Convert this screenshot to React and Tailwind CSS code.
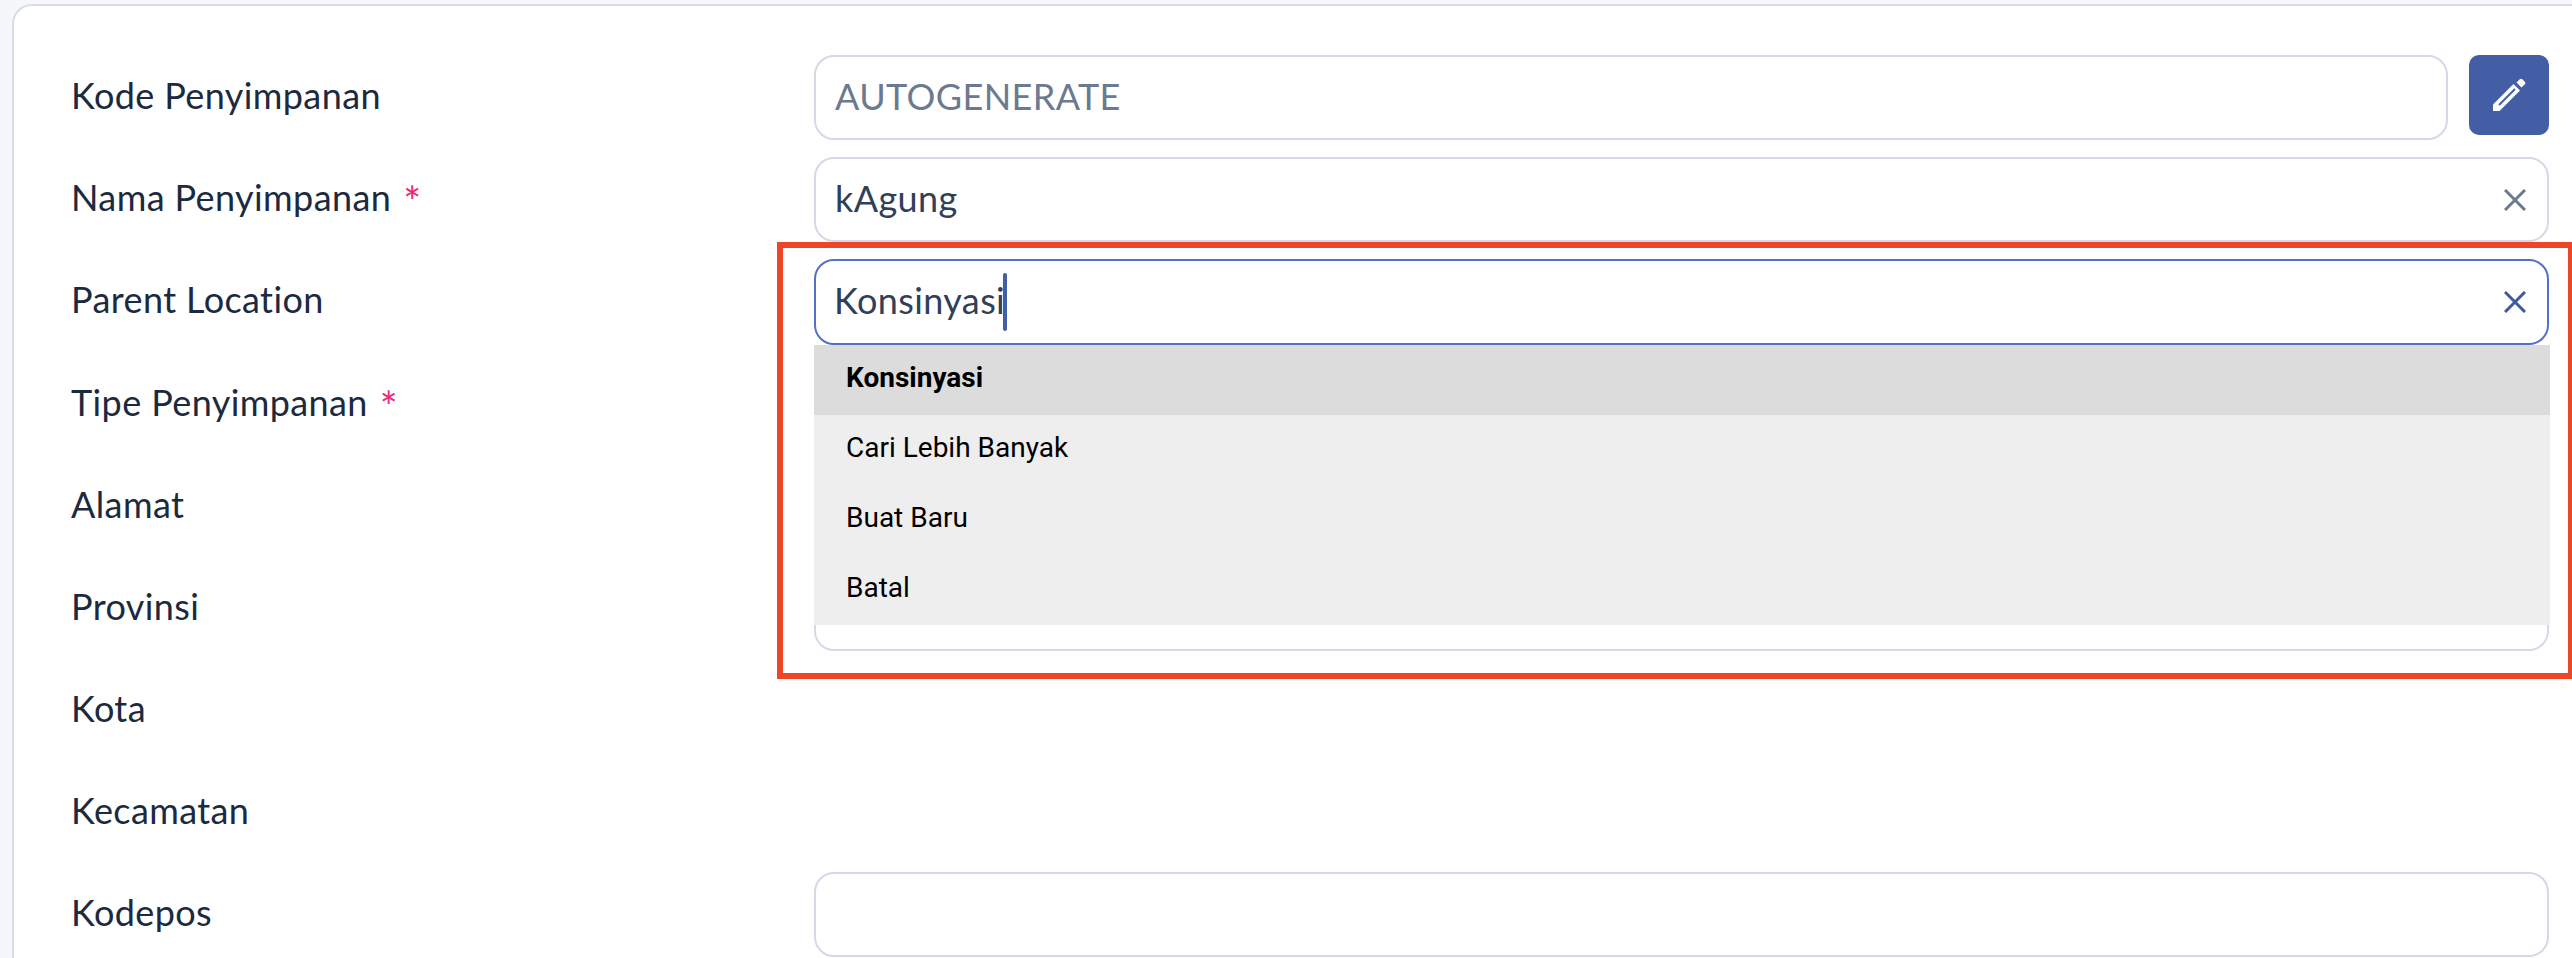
const FIELDS = [
  { label: 'Kode Penyimpanan', input: 'code' },
  { label: 'Nama Penyimpanan', required: true, input: 'name' },
  { label: 'Parent Location', input: 'parent' },
  { label: 'Tipe Penyimpanan', required: true },
  { label: 'Alamat' },
  { label: 'Provinsi' },
  { label: 'Kota' },
  { label: 'Kecamatan' },
  { label: 'Kodepos', input: 'empty' },
];

const OPTIONS = ['Konsinyasi', 'Cari Lebih Banyak', 'Buat Baru', 'Batal'];

function CloseIcon({ className }) {
  return (
    <svg viewBox="0 0 22 22" className={className} fill="none" stroke="currentColor" strokeWidth="3">
      <path d="M1 1 21 21M21 1 1 21" />
    </svg>
  );
}

function PencilIcon() {
  return (
    <svg viewBox="0 0 34 34" className="w-[34px] h-[34px]" fill="#fff">
      <path d="M1 33V26.5L21.5 6 28 12.5 7.5 33Z" />
      <path d="M7 27 23 11" stroke="#445ea6" strokeWidth="2" fill="none" />
      <path d="M24.5 4.5 27.5 1.5a2 2 0 0 1 3 0l2 2a2 2 0 0 1 0 3L29.5 9.5Z" />
    </svg>
  );
}

function ParentInput() {
  return (
    <div className="relative">
      <div className="h-[86px] flex items-center justify-between pl-[18px] pr-[21px] rounded-[20px] border-2 border-[#5570c8] bg-white text-[#2f4058]">
        <div className="flex items-center">
          <span className="pb-1">Konsinyasi</span>
          <span className="w-1 h-[58px] -ml-0.5 rounded-full bg-[#445ea6]" />
        </div>
        <CloseIcon className="w-[22px] h-[22px] text-[#40589f]" />
      </div>
      {/* dropdown over the next fields */}
      <div className="absolute z-10 left-0 right-0 top-full h-[306px] rounded-b-[20px] border-x-2 border-b-2 border-[#d3d9e6] bg-white">
        <div className="-mx-0.5 -mr-[3px] font-['Roboto',sans-serif] text-[28px] tracking-normal text-black bg-[#eeeeee]">
          {OPTIONS.map((opt, i) => (
            <div key={opt} className={`h-[70px] flex items-center pl-[32px] pb-1 ${i === 0 ? 'bg-[#dcdcdc] font-bold' : ''}`}>
              {opt}
            </div>
          ))}
        </div>
      </div>
    </div>
  );
}

function FieldInput({ type }) {
  if (type === 'code') {
    return (
      <div className="flex gap-[21px]">
        <div className="flex-1 h-[85px] flex items-center pl-[19px] pb-1 rounded-[20px] border-2 border-[#d3d9e6] bg-white text-[#6b7a90]">
          AUTOGENERATE
        </div>
        <button className="w-[80px] h-[80px] flex items-center justify-center rounded-[10px] bg-[#445ea6]">
          <PencilIcon />
        </button>
      </div>
    );
  }
  if (type === 'name') {
    return (
      <div className="h-[85px] flex items-center justify-between pl-[19px] pr-[21px] rounded-[20px] border-2 border-[#d3d9e6] bg-white text-[#2f4058]">
        <span className="pb-1">kAgung</span>
        <CloseIcon className="w-[22px] h-[22px] text-[#6b7a8c]" />
      </div>
    );
  }
  if (type === 'parent') return <ParentInput />;
  if (type === 'empty') return <div className="h-[85px] rounded-[20px] border-2 border-[#d3d9e6] bg-white" />;
  return null;
}

export default function App() {
  return (
    <div className="h-[958px] overflow-hidden bg-[#f6f7fb] pl-3 pt-1 font-['Lato',sans-serif] text-[36px] tracking-[0.4px]">
      <div className="relative h-[1000px] bg-white rounded-tl-[20px] border-t-2 border-l-2 border-[#d9dce8] pt-[49px] pl-[57px] pr-[23px]">
        <div className="flex flex-col gap-[17px]">
          {FIELDS.map(f => (
            <div key={f.label} className="grid grid-cols-[743px_1fr] min-h-[85px]">
              <div className="h-[85px] flex items-center pb-[6px] text-[#1c2a40]">
                {f.label}
                {f.required && <span className="ml-3 mt-2 text-[42px] leading-none text-[#ec2a74]">*</span>}
              </div>
              <FieldInput type={f.input} />
            </div>
          ))}
        </div>
        {/* annotation frame from the screenshot */}
        <div className="absolute z-20 left-[763px] top-[236px] w-[1797px] h-[437px] border-[6px] border-[#ee4528] pointer-events-none" />
      </div>
    </div>
  );
}
